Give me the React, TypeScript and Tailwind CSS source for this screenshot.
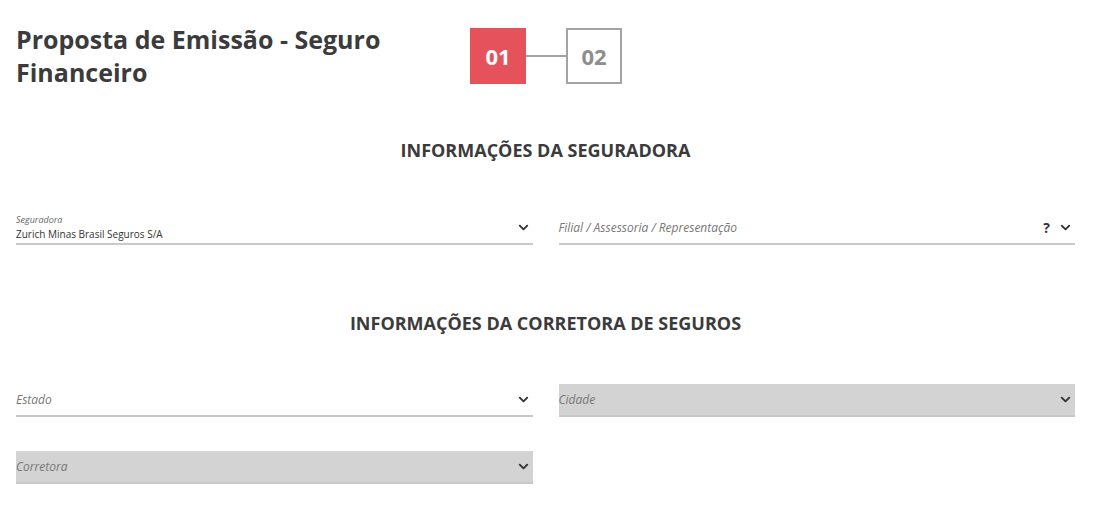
import { ChevronDown } from 'lucide-react'

interface FieldProps {
  label?: string
  value?: string
  placeholder?: string
  disabled?: boolean
  help?: boolean
}

function SelectField({ label, value, placeholder, disabled, help }: FieldProps) {
  return (
    <div
      className={`relative flex h-[33px] items-center border-b-2 border-[#c9c9c9] ${
        disabled ? 'bg-[#d3d3d3]' : 'bg-white'
      }`}
    >
      {value ? (
        <div className="flex flex-col self-start pt-[3px] leading-none">
          <span className="text-[9px] italic text-[#666]">{label}</span>
          <span className="mt-[5px] text-[10px] text-[#333]">{value}</span>
        </div>
      ) : (
        <span className="text-[12px] italic text-[#777]">{placeholder}</span>
      )}
      <div className="ml-auto flex items-center gap-[8px] pr-[2px]">
        {help && <span className="text-[14px] font-bold text-[#333]">?</span>}
        <ChevronDown size={15} strokeWidth={3} className="text-[#333]" />
      </div>
    </div>
  )
}

export default function App() {
  return (
    <div
      className="min-h-[512px] w-[1101px] bg-white pl-[16px] pr-[26px] text-[#3b3b3b]"
      style={{ fontFamily: '"Open Sans", "Liberation Sans", sans-serif' }}
    >
      {/* Header */}
      <div className="flex pt-[23px]">
        <h1 className="w-[454px] text-[25px] font-bold leading-[33px] text-[#3b3b3b]">
          Proposta de Emissão - Seguro Financeiro
        </h1>
        <div className="mt-[5px] flex items-center self-start">
          <div className="flex h-[56px] w-[56px] items-center justify-center bg-[#e5525b] text-[22px] font-bold text-white">
            01
          </div>
          <div className="h-[2px] w-[40px] bg-[#a3a3a3]" />
          <div className="flex h-[56px] w-[56px] items-center justify-center border-2 border-[#a3a3a3] text-[22px] font-bold text-[#8d8d8d]">
            02
          </div>
        </div>
      </div>

      {/* Seguradora */}
      <h2 className="mt-[51px] text-center text-[18px] font-bold uppercase leading-[20px] text-[#3b3b3b]">
        Informações da Seguradora
      </h2>
      <div className="mt-[52px] grid grid-cols-2 gap-x-[26px]">
        <SelectField label="Seguradora" value="Zurich Minas Brasil Seguros S/A" />
        <SelectField placeholder="Filial / Assessoria / Representação" help />
      </div>

      {/* Corretora */}
      <h2 className="mt-[68px] text-center text-[18px] font-bold uppercase leading-[20px] text-[#3b3b3b]">
        Informações da Corretora de Seguros
      </h2>
      <div className="mt-[51px] grid grid-cols-2 gap-x-[26px] gap-y-[34px]">
        <SelectField placeholder="Estado" />
        <SelectField placeholder="Cidade" disabled />
        <SelectField placeholder="Corretora" disabled />
      </div>
    </div>
  )
}
